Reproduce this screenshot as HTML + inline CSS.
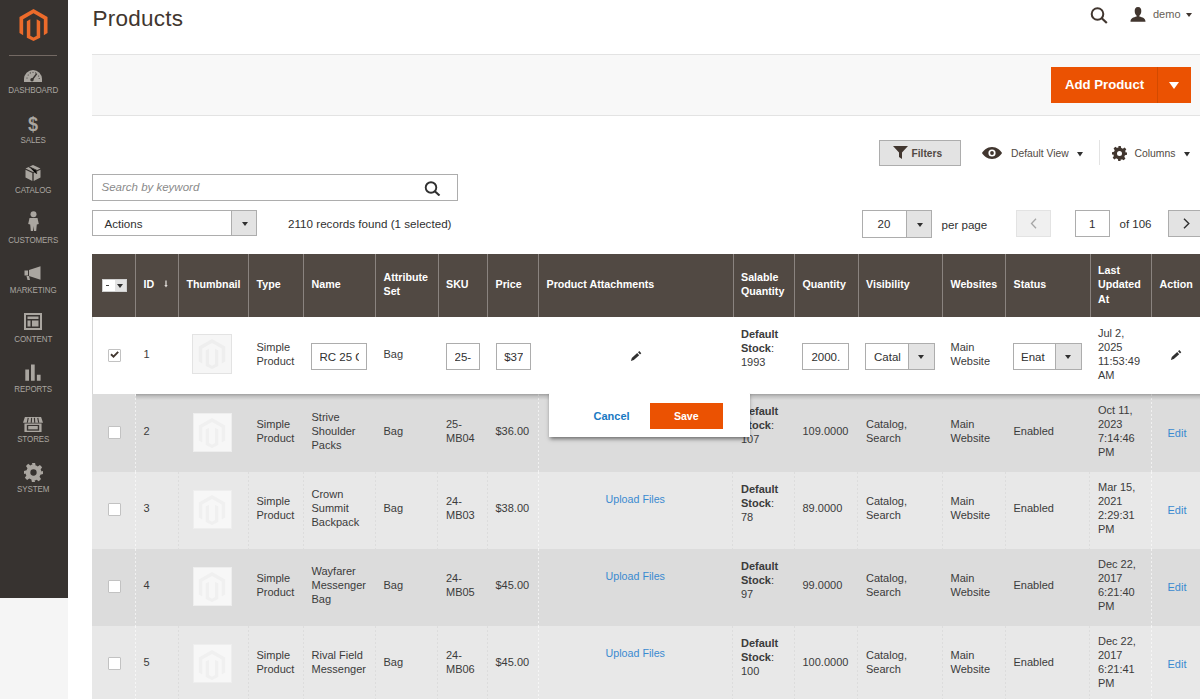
<!DOCTYPE html><html><head><meta charset="utf-8"><style>
*{margin:0;padding:0;box-sizing:border-box}
html,body{width:1200px;height:699px;overflow:hidden;background:#fff;font-family:"Liberation Sans", sans-serif;color:#303030}
.abs{position:absolute}
.sb{position:absolute;left:0;top:0;width:68px;height:598px;background:#373330}
.below{position:absolute;left:0;top:598px;width:68px;height:101px;background:#f5f5f5}
.mi{position:absolute;left:0;width:68px;text-align:center;color:#aaa6a0;font-size:8px;letter-spacing:-0.1px}
.mi span{display:inline-block;transform:scale(1,1.22)}
.cell{position:absolute;display:flex;align-items:center;padding-left:8.5px;padding-bottom:4.2px;font-size:11px;line-height:14px;color:#3b3b3b}
.hcell{position:absolute;display:flex;align-items:center;padding-left:7.5px;padding-bottom:2.8px;font-size:10.7px;line-height:14.5px;color:#fff;font-weight:bold;border-left:1px solid #8a837f}
.inp{position:absolute;background:#fff;border:1px solid #adadad;font-size:11.5px;color:#303030;overflow:hidden;white-space:nowrap}
.lnk{color:#007bdb}
.lnk2{color:#3a8ad0}
.dl{position:absolute;width:1px;background:repeating-linear-gradient(rgba(255,255,255,0.6) 0 2px,rgba(255,255,255,0) 2px 4px)}
.dl2{position:absolute;width:1px;background:repeating-linear-gradient(rgba(0,0,0,0.05) 0 2px,rgba(0,0,0,0) 2px 4px)}
</style></head><body>
<div class="sb"></div><div class="below"></div>
<svg class="abs" style="left:19.3px;top:9.2px" width="29" height="32" viewBox="0 0 30 33">
<path fill="#ec6b2b" d="M15 0 L29.5 8.3 V24.8 L25.7 27 V10.5 L15 4.3 L4.3 10.5 V27 L0.5 24.8 V8.3 Z M8.1 12.6 L11.7 10.6 V27.5 L15 29.4 L18.3 27.5 V10.6 L21.9 12.6 V29.6 L15 33 L8.1 29.6 Z"/>
</svg>
<div class="abs" style="left:9px;top:55px;width:48px;height:1px;background:#736963"></div>
<div class="mi" style="top:85.3px;left:-0.8px"><span>DASHBOARD</span></div>
<div class="mi" style="top:134.8px;left:-0.8px"><span>SALES</span></div>
<div class="mi" style="top:184.8px;left:-0.8px"><span>CATALOG</span></div>
<div class="mi" style="top:234.8px;left:-0.8px"><span>CUSTOMERS</span></div>
<div class="mi" style="top:284.8px;left:-0.8px"><span>MARKETING</span></div>
<div class="mi" style="top:334.3px;left:-0.8px"><span>CONTENT</span></div>
<div class="mi" style="top:384.3px;left:-0.8px"><span>REPORTS</span></div>
<div class="mi" style="top:433.8px;left:-0.8px"><span>STORES</span></div>
<div class="mi" style="top:483.8px;left:-0.8px"><span>SYSTEM</span></div>
<svg class="abs" style="left:24px;top:69.5px" width="18" height="12.5" viewBox="0 0 18 12.5">
<path fill="#aaa6a0" d="M9 0 A9 9 0 0 1 18 9 V12.5 H0 V9 A9 9 0 0 1 9 0Z"/>
<path stroke="#373330" stroke-width="1.5" d="M8.3 9.5 L12.8 3.6"/><circle cx="8" cy="9.8" r="1.7" fill="#373330"/>
<g fill="#373330"><circle cx="3" cy="8" r="0.55"/><circle cx="4.2" cy="5" r="0.55"/><circle cx="6.3" cy="2.9" r="0.55"/><circle cx="9" cy="2.2" r="0.55"/><circle cx="11.7" cy="2.9" r="0.55"/><circle cx="14.6" cy="6" r="0.55"/><circle cx="15.2" cy="8.5" r="0.55"/></g>
</svg>
<div class="abs" style="left:-1px;top:112.5px;width:68px;text-align:center;color:#aaa6a0;font-size:20.5px;font-weight:bold;line-height:22px;transform:scaleX(0.88)">$</div>
<svg class="abs" style="left:25px;top:165px" width="16" height="16" viewBox="0 0 16 16">
<path fill="#aaa6a0" d="M8 0 L15.5 3.5 L8 7 L0.5 3.5Z M0.5 4.8 L7.3 8 V16 L0.5 12.6Z M8.7 8 L15.5 4.8 V12.6 L8.7 16Z"/>
<path stroke="#373330" stroke-width="1.2" d="M4 1.8 L11.5 5.3 V9"/>
</svg>
<svg class="abs" style="left:28px;top:211px" width="11" height="20" viewBox="0 0 11 20">
<circle cx="5.5" cy="3.2" r="3" fill="#aaa6a0"/>
<path fill="#aaa6a0" d="M1.5 7 H9.5 L10.8 13 L8.8 13.5 L8.2 20 H6 L5.5 15 L5 20 H2.8 L2.2 13.5 L0.2 13Z"/>
</svg>
<svg class="abs" style="left:24px;top:266px" width="19" height="14" viewBox="0 0 19 14">
<path fill="#aaa6a0" d="M0.5 4.5 H4 V9.5 H0.5Z M5 4 L16.5 0.3 V13.7 L5 10Z M2.5 10 H5 L6 14 H3.5Z"/>
</svg>
<svg class="abs" style="left:24px;top:313px" width="18" height="17" viewBox="0 0 18 17">
<path fill="#aaa6a0" fill-rule="evenodd" d="M0 0 H18 V17 H0Z M2 2 V15 H16 V2Z M3.5 3.5 H14.5 V6 H3.5Z M3.5 7.5 H6.5 V13.5 H3.5Z M8 7.5 H14.5 V13.5 H8Z"/>
</svg>
<svg class="abs" style="left:25px;top:364px" width="16" height="17" viewBox="0 0 16 17">
<path fill="#aaa6a0" d="M0.3 5.5 H4 V16.7 H0.3Z M6 0.5 H9.7 V16.7 H6Z M11.9 10.8 H15.6 V16.7 H11.9Z"/>
</svg>
<svg class="abs" style="left:23px;top:416.5px" width="20" height="15" viewBox="0 0 21 17" preserveAspectRatio="none">
<path fill="#aaa6a0" d="M2 0 H19 L21 6.5 H0Z M1.5 7.5 H19.5 V17 H1.5Z"/>
<path stroke="#373330" stroke-width="1.2" d="M5.5 1 L4.5 6.5 M9 1 L8.7 6.5 M12 1 L12.3 6.5 M15.5 1 L16.5 6.5"/>
<path fill="#373330" d="M4 9 H17 V15.5 H4Z"/>
<path fill="#aaa6a0" d="M5.5 10.2 H15.5 V14 H5.5Z"/>
</svg>
<svg class="abs" style="left:24px;top:463px" width="19" height="19" viewBox="0 0 24 24">
<path fill="#aaa6a0" d="M10 0h4l.7 3.3a9 9 0 0 1 2.6 1.1l2.8-1.9 2.8 2.8-1.9 2.8a9 9 0 0 1 1.1 2.6L24 10v4l-3.3.7a9 9 0 0 1-1.1 2.6l1.9 2.8-2.8 2.8-2.8-1.9a9 9 0 0 1-2.6 1.1L14 24h-4l-.7-3.3a9 9 0 0 1-2.6-1.1l-2.8 1.9-2.8-2.8 1.9-2.8a9 9 0 0 1-1.1-2.6L0 14v-4l3.3-.7a9 9 0 0 1 1.1-2.6L2.5 3.9l2.8-2.8 2.8 1.9a9 9 0 0 1 2.6-1.1Z M12 8a4 4 0 1 0 0 8a4 4 0 1 0 0-8Z" fill-rule="evenodd"/>
</svg>
<div class="abs" style="left:92.5px;top:2.8px;font-size:22.5px;letter-spacing:0.25px;line-height:32px;color:#41362f">Products</div>
<svg class="abs" style="left:1090px;top:7px" width="19" height="17" viewBox="0 0 19 17">
<circle cx="7.5" cy="7" r="5.8" fill="none" stroke="#41362f" stroke-width="2"/>
<path d="M11.5 11 L16.8 16" stroke="#41362f" stroke-width="2.2"/></svg>
<svg class="abs" style="left:1130px;top:7px" width="16" height="15" viewBox="0 0 16 15">
<path fill="#41362f" d="M8 0 C10.5 0 11.3 1.8 11.3 4 C11.3 6.3 10.2 8.2 9.3 8.8 V9.5 C12.5 10.3 15.5 11 15.5 14.8 H0.5 C0.5 11 3.5 10.3 6.7 9.5 V8.8 C5.8 8.2 4.7 6.3 4.7 4 C4.7 1.8 5.5 0 8 0Z"/></svg>
<div class="abs" style="left:1153px;top:6px;font-size:11px;line-height:16px;color:#676056">demo</div>
<svg class="abs" style="left:1186px;top:13px" width="6" height="4" viewBox="0 0 6 4"><path d="M0 0H6L3 4Z" fill="#41362f"/></svg>
<div class="abs" style="left:92px;top:54px;width:1108px;height:62px;background:#f8f8f8;border-top:1px solid #e3e3e3;border-bottom:1px solid #e3e3e3"></div>
<div class="abs" style="left:1051px;top:67px;width:140px;height:36px;background:#eb5202"></div>
<div class="abs" style="left:1157px;top:67px;width:1px;height:36px;background:#d24a00"></div>
<div class="abs" style="left:1065px;top:76px;font-size:13.2px;line-height:18px;font-weight:bold;color:#fff">Add Product</div>
<svg class="abs" style="left:1169px;top:82px" width="10" height="7" viewBox="0 0 10 7"><path d="M0 0H10L5 7Z" fill="#fff"/></svg>
<div class="abs" style="left:879px;top:140px;width:81.5px;height:26px;background:#e3e3e3;border:1px solid #adadad"></div>
<svg class="abs" style="left:893px;top:146px" width="15" height="13" viewBox="0 0 15 13"><path d="M0 0H15L9 6.5V13L6 11V6.5Z" fill="#41362f"/></svg>
<div class="abs" style="left:911.5px;top:146px;font-size:10.2px;line-height:16px;font-weight:bold;color:#514943">Filters</div>
<svg class="abs" style="left:982px;top:147px" width="20" height="12" viewBox="0 0 20 12">
<path fill="#41362f" d="M10 0 C15 0 18.5 3.5 20 6 C18.5 8.5 15 12 10 12 C5 12 1.5 8.5 0 6 C1.5 3.5 5 0 10 0Z"/>
<circle cx="10" cy="6" r="3.6" fill="#fff"/><circle cx="10" cy="6" r="1.9" fill="#41362f"/></svg>
<div class="abs" style="left:1011px;top:146px;font-size:10.3px;line-height:16px;color:#514943">Default View</div>
<svg class="abs" style="left:1077px;top:152px" width="6" height="5" viewBox="0 0 6 5"><path d="M0 0H6L3 4.5Z" fill="#303030"/></svg>
<div class="abs" style="left:1099px;top:140px;width:1px;height:25px;background:#e3e3e3"></div>
<svg class="abs" style="left:1112px;top:146px" width="15" height="15" viewBox="0 0 24 24">
<path fill="#41362f" fill-rule="evenodd" d="M10 0h4l.7 3.3a9 9 0 0 1 2.6 1.1l2.8-1.9 2.8 2.8-1.9 2.8a9 9 0 0 1 1.1 2.6L24 10v4l-3.3.7a9 9 0 0 1-1.1 2.6l1.9 2.8-2.8 2.8-2.8-1.9a9 9 0 0 1-2.6 1.1L14 24h-4l-.7-3.3a9 9 0 0 1-2.6-1.1l-2.8 1.9-2.8-2.8 1.9-2.8a9 9 0 0 1-1.1-2.6L0 14v-4l3.3-.7a9 9 0 0 1 1.1-2.6L2.5 3.9l2.8-2.8 2.8 1.9a9 9 0 0 1 2.6-1.1Z M12 8a4 4 0 1 0 0 8a4 4 0 1 0 0-8Z"/></svg>
<div class="abs" style="left:1134.5px;top:146px;font-size:10.4px;line-height:16px;color:#514943">Columns</div>
<svg class="abs" style="left:1184px;top:152px" width="6" height="5" viewBox="0 0 6 5"><path d="M0 0H6L3 4.5Z" fill="#303030"/></svg>
<div class="abs" style="left:92px;top:174px;width:366px;height:27px;border:1px solid #adadad;background:#fff"></div>
<div class="abs" style="left:101.5px;top:180px;font-size:11.5px;line-height:15px;font-style:italic;color:#8a8a8a">Search by keyword</div>
<svg class="abs" style="left:424px;top:181px" width="18" height="15" viewBox="0 0 18 15">
<circle cx="7" cy="6.5" r="5.3" fill="none" stroke="#303030" stroke-width="1.9"/>
<path d="M10.8 10.2 L15.5 14.5" stroke="#303030" stroke-width="2.1"/></svg>
<div class="abs" style="left:92px;top:209.5px;width:165px;height:26.5px;border:1px solid #adadad;background:#fff"></div>
<div class="abs" style="left:231px;top:210.5px;width:25px;height:24.5px;background:#e3e3e3;border-left:1px solid #adadad"></div>
<svg class="abs" style="left:241.5px;top:221.5px" width="6" height="4" viewBox="0 0 6 4"><path d="M0 0H6L3 4Z" fill="#303030"/></svg>
<div class="abs" style="left:104.5px;top:215.5px;font-size:11.6px;line-height:15px;color:#303030">Actions</div>
<div class="abs" style="left:288px;top:215.5px;font-size:11.65px;line-height:15px;color:#303030">2110 records found (1 selected)</div>
<div class="abs" style="left:862px;top:210px;width:70px;height:27.5px;border:1px solid #adadad;background:#fff"></div>
<div class="abs" style="left:906px;top:211px;width:25px;height:25.5px;background:#e3e3e3;border-left:1px solid #adadad"></div>
<svg class="abs" style="left:916.5px;top:222.5px" width="6" height="4" viewBox="0 0 6 4"><path d="M0 0H6L3 4Z" fill="#303030"/></svg>
<div class="abs" style="left:877.5px;top:217px;font-size:11.5px;line-height:15px;color:#303030">20</div>
<div class="abs" style="left:941.5px;top:216.5px;font-size:11.6px;line-height:15px;color:#303030">per page</div>
<div class="abs" style="left:1016px;top:210px;width:35px;height:26.5px;border:1px solid #e3e3e3;background:#f0f0f0"></div>
<svg class="abs" style="left:1029.5px;top:218px" width="7" height="11" viewBox="0 0 7 11"><path d="M6 0.7 L1.5 5.5 L6 10.3" stroke="#a6a6a6" stroke-width="1.3" fill="none"/></svg>
<div class="abs" style="left:1074.5px;top:210px;width:35.5px;height:26.5px;border:1px solid #adadad;background:#fff"></div>
<div class="abs" style="left:1089px;top:217px;font-size:11.5px;line-height:15px;color:#303030">1</div>
<div class="abs" style="left:1119.5px;top:217px;font-size:11.5px;line-height:15px;color:#303030">of 106</div>
<div class="abs" style="left:1168px;top:210px;width:40px;height:26.5px;border:1px solid #adadad;background:#e3e3e3"></div>
<svg class="abs" style="left:1182.5px;top:217.5px" width="8" height="11" viewBox="0 0 8 11"><path d="M1 0.7 L5.8 5.5 L1 10.3" stroke="#303030" stroke-width="1.4" fill="none"/></svg>
<div class="abs" style="left:92px;top:254px;width:1108px;height:63.30000000000001px;background:#514943"></div>
<div class="hcell" style="left:92px;top:254px;width:43px;height:63.30000000000001px;border-left:none;"><div></div></div>
<div class="hcell" style="left:135px;top:254px;width:43px;height:63.30000000000001px;"><div>ID</div></div>
<div class="hcell" style="left:178px;top:254px;width:70px;height:63.30000000000001px;"><div>Thumbnail</div></div>
<div class="hcell" style="left:248px;top:254px;width:55px;height:63.30000000000001px;"><div>Type</div></div>
<div class="hcell" style="left:303px;top:254px;width:72px;height:63.30000000000001px;"><div>Name</div></div>
<div class="hcell" style="left:375px;top:254px;width:62.5px;height:63.30000000000001px;"><div>Attribute<br>Set</div></div>
<div class="hcell" style="left:437.5px;top:254px;width:49.5px;height:63.30000000000001px;"><div>SKU</div></div>
<div class="hcell" style="left:487px;top:254px;width:51px;height:63.30000000000001px;"><div>Price</div></div>
<div class="hcell" style="left:538px;top:254px;width:194.5px;height:63.30000000000001px;"><div>Product Attachments</div></div>
<div class="hcell" style="left:732.5px;top:254px;width:61.5px;height:63.30000000000001px;"><div>Salable<br>Quantity</div></div>
<div class="hcell" style="left:794px;top:254px;width:63.5px;height:63.30000000000001px;"><div>Quantity</div></div>
<div class="hcell" style="left:857.5px;top:254px;width:84.5px;height:63.30000000000001px;"><div>Visibility</div></div>
<div class="hcell" style="left:942px;top:254px;width:63px;height:63.30000000000001px;"><div>Websites</div></div>
<div class="hcell" style="left:1005px;top:254px;width:84.5px;height:63.30000000000001px;"><div>Status</div></div>
<div class="hcell" style="left:1089.5px;top:254px;width:61.5px;height:63.30000000000001px;"><div>Last<br>Updated<br>At</div></div>
<div class="hcell" style="left:1151px;top:254px;width:64px;height:63.30000000000001px;"><div>Action</div></div>
<div class="abs" style="left:102px;top:279px;width:25px;height:13px;background:#fff;border:1px solid #d0d0d0"></div>
<div class="abs" style="left:114.5px;top:280px;width:11.5px;height:11px;background:#e3e3e3"></div>
<div class="abs" style="left:106px;top:285.3px;width:3.2px;height:1.2px;background:#404040"></div>
<svg class="abs" style="left:117px;top:283.5px" width="6" height="4" viewBox="0 0 6 4"><path d="M0 0H6L3 4Z" fill="#303030"/></svg>
<svg class="abs" style="left:164px;top:280px" width="4" height="8" viewBox="0 0 4 8"><path d="M2 0.5 V6" stroke="#dedad6" stroke-width="1.3"/><path d="M0.3 5 H3.7 L2 7.5Z" fill="#dedad6"/></svg>
<div class="abs" style="left:92px;top:394.4px;width:1108px;height:77.60000000000002px;background:#dcdcdc"></div>
<div class="dl" style="left:134.5px;top:394.4px;height:77.60000000000002px"></div>
<div class="dl" style="left:537.5px;top:394.4px;height:77.60000000000002px"></div>
<div class="dl" style="left:1150.5px;top:394.4px;height:77.60000000000002px"></div>
<div class="cell" style="left:135px;top:394.4px;width:43px;height:77.60000000000002px;"><div>2</div></div>
<div class="cell" style="left:248px;top:394.4px;width:55px;height:77.60000000000002px;"><div>Simple<br>Product</div></div>
<div class="cell" style="left:303px;top:394.4px;width:72px;height:77.60000000000002px;"><div>Strive<br>Shoulder<br>Packs</div></div>
<div class="cell" style="left:375px;top:394.4px;width:62.5px;height:77.60000000000002px;"><div>Bag</div></div>
<div class="cell" style="left:437.5px;top:394.4px;width:49.5px;height:77.60000000000002px;"><div>25-<br>MB04</div></div>
<div class="cell" style="left:487px;top:394.4px;width:51px;height:77.60000000000002px;"><div>$36.00</div></div>
<div class="cell" style="left:732.5px;top:394.4px;width:61.5px;height:77.60000000000002px;padding-bottom:15.7px;"><div><b>Default<br>Stock</b>:<br>107</div></div>
<div class="cell" style="left:794px;top:394.4px;width:63.5px;height:77.60000000000002px;"><div>109.0000</div></div>
<div class="cell" style="left:857.5px;top:394.4px;width:84.5px;height:77.60000000000002px;"><div>Catalog,<br>Search</div></div>
<div class="cell" style="left:942px;top:394.4px;width:63px;height:77.60000000000002px;"><div>Main<br>Website</div></div>
<div class="cell" style="left:1005px;top:394.4px;width:84.5px;height:77.60000000000002px;"><div>Enabled</div></div>
<div class="cell" style="left:1089.5px;top:394.4px;width:61.5px;height:77.60000000000002px;"><div>Oct 11,<br>2023<br>7:14:46<br>PM</div></div>
<div class="abs" style="left:108px;top:425.59999999999997px;width:13px;height:13px;background:#fff;border:1px solid #c2c2c2;border-radius:1px"></div>
<div class="abs" style="left:192.5px;top:412.7px;width:39px;height:39px;background:#f7f7f7;border:1px solid #eeeeee"></div>
<svg class="abs" style="left:197px;top:418.2px" width="30" height="30" viewBox="0 0 30 33"><path fill="#f0f0f0" d="M15 0 L29.5 8.3 V24.8 L25.7 27 V10.5 L15 4.3 L4.3 10.5 V27 L0.5 24.8 V8.3 Z M8.1 12.6 L11.7 10.6 V27.5 L15 29.4 L18.3 27.5 V10.6 L21.9 12.6 V29.6 L15 33 L8.1 29.6 Z"/></svg>
<div class="abs lnk2" style="left:1167.5px;top:425.59999999999997px;font-size:11px;line-height:14px">Edit</div>
<div class="abs" style="left:92px;top:472.0px;width:1108px;height:76.89999999999998px;background:#e8e8e8"></div>
<div class="dl" style="left:134.5px;top:472.0px;height:76.89999999999998px"></div>
<div class="dl2" style="left:177.5px;top:472.0px;height:76.89999999999998px"></div>
<div class="dl2" style="left:247.5px;top:472.0px;height:76.89999999999998px"></div>
<div class="dl2" style="left:302.5px;top:472.0px;height:76.89999999999998px"></div>
<div class="dl2" style="left:374.5px;top:472.0px;height:76.89999999999998px"></div>
<div class="dl2" style="left:437.0px;top:472.0px;height:76.89999999999998px"></div>
<div class="dl2" style="left:486.5px;top:472.0px;height:76.89999999999998px"></div>
<div class="dl" style="left:537.5px;top:472.0px;height:76.89999999999998px"></div>
<div class="dl2" style="left:732.0px;top:472.0px;height:76.89999999999998px"></div>
<div class="dl2" style="left:793.5px;top:472.0px;height:76.89999999999998px"></div>
<div class="dl2" style="left:857.0px;top:472.0px;height:76.89999999999998px"></div>
<div class="dl2" style="left:941.5px;top:472.0px;height:76.89999999999998px"></div>
<div class="dl2" style="left:1004.5px;top:472.0px;height:76.89999999999998px"></div>
<div class="dl2" style="left:1089.0px;top:472.0px;height:76.89999999999998px"></div>
<div class="dl" style="left:1150.5px;top:472.0px;height:76.89999999999998px"></div>
<div class="cell" style="left:135px;top:472.0px;width:43px;height:76.89999999999998px;"><div>3</div></div>
<div class="cell" style="left:248px;top:472.0px;width:55px;height:76.89999999999998px;"><div>Simple<br>Product</div></div>
<div class="cell" style="left:303px;top:472.0px;width:72px;height:76.89999999999998px;"><div>Crown<br>Summit<br>Backpack</div></div>
<div class="cell" style="left:375px;top:472.0px;width:62.5px;height:76.89999999999998px;"><div>Bag</div></div>
<div class="cell" style="left:437.5px;top:472.0px;width:49.5px;height:76.89999999999998px;"><div>24-<br>MB03</div></div>
<div class="cell" style="left:487px;top:472.0px;width:51px;height:76.89999999999998px;"><div>$38.00</div></div>
<div class="cell" style="left:732.5px;top:472.0px;width:61.5px;height:76.89999999999998px;padding-bottom:15.7px;"><div><b>Default<br>Stock</b>:<br>78</div></div>
<div class="cell" style="left:794px;top:472.0px;width:63.5px;height:76.89999999999998px;"><div>89.0000</div></div>
<div class="cell" style="left:857.5px;top:472.0px;width:84.5px;height:76.89999999999998px;"><div>Catalog,<br>Search</div></div>
<div class="cell" style="left:942px;top:472.0px;width:63px;height:76.89999999999998px;"><div>Main<br>Website</div></div>
<div class="cell" style="left:1005px;top:472.0px;width:84.5px;height:76.89999999999998px;"><div>Enabled</div></div>
<div class="cell" style="left:1089.5px;top:472.0px;width:61.5px;height:76.89999999999998px;"><div>Mar 15,<br>2021<br>2:29:31<br>PM</div></div>
<div class="abs" style="left:108px;top:502.84999999999997px;width:13px;height:13px;background:#fff;border:1px solid #c2c2c2;border-radius:1px"></div>
<div class="abs" style="left:192.5px;top:489.95px;width:39px;height:39px;background:#f7f7f7;border:1px solid #eeeeee"></div>
<svg class="abs" style="left:197px;top:495.45px" width="30" height="30" viewBox="0 0 30 33"><path fill="#f0f0f0" d="M15 0 L29.5 8.3 V24.8 L25.7 27 V10.5 L15 4.3 L4.3 10.5 V27 L0.5 24.8 V8.3 Z M8.1 12.6 L11.7 10.6 V27.5 L15 29.4 L18.3 27.5 V10.6 L21.9 12.6 V29.6 L15 33 L8.1 29.6 Z"/></svg>
<div class="abs lnk2" style="left:538px;top:492.25px;width:194.5px;text-align:center;font-size:10.7px;line-height:14px">Upload Files</div>
<div class="abs lnk2" style="left:1167.5px;top:502.84999999999997px;font-size:11px;line-height:14px">Edit</div>
<div class="abs" style="left:92px;top:548.9px;width:1108px;height:77.10000000000002px;background:#dcdcdc"></div>
<div class="dl" style="left:134.5px;top:548.9px;height:77.10000000000002px"></div>
<div class="dl" style="left:537.5px;top:548.9px;height:77.10000000000002px"></div>
<div class="dl" style="left:1150.5px;top:548.9px;height:77.10000000000002px"></div>
<div class="cell" style="left:135px;top:548.9px;width:43px;height:77.10000000000002px;"><div>4</div></div>
<div class="cell" style="left:248px;top:548.9px;width:55px;height:77.10000000000002px;"><div>Simple<br>Product</div></div>
<div class="cell" style="left:303px;top:548.9px;width:72px;height:77.10000000000002px;"><div>Wayfarer<br>Messenger<br>Bag</div></div>
<div class="cell" style="left:375px;top:548.9px;width:62.5px;height:77.10000000000002px;"><div>Bag</div></div>
<div class="cell" style="left:437.5px;top:548.9px;width:49.5px;height:77.10000000000002px;"><div>24-<br>MB05</div></div>
<div class="cell" style="left:487px;top:548.9px;width:51px;height:77.10000000000002px;"><div>$45.00</div></div>
<div class="cell" style="left:732.5px;top:548.9px;width:61.5px;height:77.10000000000002px;padding-bottom:15.7px;"><div><b>Default<br>Stock</b>:<br>97</div></div>
<div class="cell" style="left:794px;top:548.9px;width:63.5px;height:77.10000000000002px;"><div>99.0000</div></div>
<div class="cell" style="left:857.5px;top:548.9px;width:84.5px;height:77.10000000000002px;"><div>Catalog,<br>Search</div></div>
<div class="cell" style="left:942px;top:548.9px;width:63px;height:77.10000000000002px;"><div>Main<br>Website</div></div>
<div class="cell" style="left:1005px;top:548.9px;width:84.5px;height:77.10000000000002px;"><div>Enabled</div></div>
<div class="cell" style="left:1089.5px;top:548.9px;width:61.5px;height:77.10000000000002px;"><div>Dec 22,<br>2017<br>6:21:40<br>PM</div></div>
<div class="abs" style="left:108px;top:579.85px;width:13px;height:13px;background:#fff;border:1px solid #c2c2c2;border-radius:1px"></div>
<div class="abs" style="left:192.5px;top:566.95px;width:39px;height:39px;background:#f7f7f7;border:1px solid #eeeeee"></div>
<svg class="abs" style="left:197px;top:572.45px" width="30" height="30" viewBox="0 0 30 33"><path fill="#f0f0f0" d="M15 0 L29.5 8.3 V24.8 L25.7 27 V10.5 L15 4.3 L4.3 10.5 V27 L0.5 24.8 V8.3 Z M8.1 12.6 L11.7 10.6 V27.5 L15 29.4 L18.3 27.5 V10.6 L21.9 12.6 V29.6 L15 33 L8.1 29.6 Z"/></svg>
<div class="abs lnk2" style="left:538px;top:569.25px;width:194.5px;text-align:center;font-size:10.7px;line-height:14px">Upload Files</div>
<div class="abs lnk2" style="left:1167.5px;top:579.85px;font-size:11px;line-height:14px">Edit</div>
<div class="abs" style="left:92px;top:626.0px;width:1108px;height:77.0px;background:#e8e8e8"></div>
<div class="dl" style="left:134.5px;top:626.0px;height:77.0px"></div>
<div class="dl2" style="left:177.5px;top:626.0px;height:77.0px"></div>
<div class="dl2" style="left:247.5px;top:626.0px;height:77.0px"></div>
<div class="dl2" style="left:302.5px;top:626.0px;height:77.0px"></div>
<div class="dl2" style="left:374.5px;top:626.0px;height:77.0px"></div>
<div class="dl2" style="left:437.0px;top:626.0px;height:77.0px"></div>
<div class="dl2" style="left:486.5px;top:626.0px;height:77.0px"></div>
<div class="dl" style="left:537.5px;top:626.0px;height:77.0px"></div>
<div class="dl2" style="left:732.0px;top:626.0px;height:77.0px"></div>
<div class="dl2" style="left:793.5px;top:626.0px;height:77.0px"></div>
<div class="dl2" style="left:857.0px;top:626.0px;height:77.0px"></div>
<div class="dl2" style="left:941.5px;top:626.0px;height:77.0px"></div>
<div class="dl2" style="left:1004.5px;top:626.0px;height:77.0px"></div>
<div class="dl2" style="left:1089.0px;top:626.0px;height:77.0px"></div>
<div class="dl" style="left:1150.5px;top:626.0px;height:77.0px"></div>
<div class="cell" style="left:135px;top:626.0px;width:43px;height:77.0px;"><div>5</div></div>
<div class="cell" style="left:248px;top:626.0px;width:55px;height:77.0px;"><div>Simple<br>Product</div></div>
<div class="cell" style="left:303px;top:626.0px;width:72px;height:77.0px;"><div>Rival Field<br>Messenger</div></div>
<div class="cell" style="left:375px;top:626.0px;width:62.5px;height:77.0px;"><div>Bag</div></div>
<div class="cell" style="left:437.5px;top:626.0px;width:49.5px;height:77.0px;"><div>24-<br>MB06</div></div>
<div class="cell" style="left:487px;top:626.0px;width:51px;height:77.0px;"><div>$45.00</div></div>
<div class="cell" style="left:732.5px;top:626.0px;width:61.5px;height:77.0px;padding-bottom:15.7px;"><div><b>Default<br>Stock</b>:<br>100</div></div>
<div class="cell" style="left:794px;top:626.0px;width:63.5px;height:77.0px;"><div>100.0000</div></div>
<div class="cell" style="left:857.5px;top:626.0px;width:84.5px;height:77.0px;"><div>Catalog,<br>Search</div></div>
<div class="cell" style="left:942px;top:626.0px;width:63px;height:77.0px;"><div>Main<br>Website</div></div>
<div class="cell" style="left:1005px;top:626.0px;width:84.5px;height:77.0px;"><div>Enabled</div></div>
<div class="cell" style="left:1089.5px;top:626.0px;width:61.5px;height:77.0px;"><div>Dec 22,<br>2017<br>6:21:41<br>PM</div></div>
<div class="abs" style="left:108px;top:656.9px;width:13px;height:13px;background:#fff;border:1px solid #c2c2c2;border-radius:1px"></div>
<div class="abs" style="left:192.5px;top:644.0px;width:39px;height:39px;background:#f7f7f7;border:1px solid #eeeeee"></div>
<svg class="abs" style="left:197px;top:649.5px" width="30" height="30" viewBox="0 0 30 33"><path fill="#f0f0f0" d="M15 0 L29.5 8.3 V24.8 L25.7 27 V10.5 L15 4.3 L4.3 10.5 V27 L0.5 24.8 V8.3 Z M8.1 12.6 L11.7 10.6 V27.5 L15 29.4 L18.3 27.5 V10.6 L21.9 12.6 V29.6 L15 33 L8.1 29.6 Z"/></svg>
<div class="abs lnk2" style="left:538px;top:646.3px;width:194.5px;text-align:center;font-size:10.7px;line-height:14px">Upload Files</div>
<div class="abs lnk2" style="left:1167.5px;top:656.9px;font-size:11px;line-height:14px">Edit</div>
<div class="abs" style="left:135.5px;top:394.4px;width:1065px;height:6px;background:linear-gradient(rgba(0,0,0,0.27),rgba(0,0,0,0.12) 40%,rgba(0,0,0,0))"></div>
<div class="abs" style="left:92px;top:317.3px;width:1108px;height:77.09999999999997px;background:#fff;border-left:1px solid #d6d6d6"></div>
<div class="cell" style="left:135px;top:317.3px;width:43px;height:77.09999999999997px;"><div>1</div></div>
<div class="cell" style="left:248px;top:317.3px;width:55px;height:77.09999999999997px;"><div>Simple<br>Product</div></div>
<div class="cell" style="left:375px;top:317.3px;width:62.5px;height:77.09999999999997px;"><div>Bag</div></div>
<div class="cell" style="left:732.5px;top:317.3px;width:61.5px;height:77.09999999999997px;padding-bottom:15.7px;"><div><b>Default<br>Stock</b>:<br>1993</div></div>
<div class="cell" style="left:942px;top:317.3px;width:63px;height:77.09999999999997px;"><div>Main<br>Website</div></div>
<div class="cell" style="left:1089.5px;top:317.3px;width:61.5px;height:77.09999999999997px;"><div>Jul 2,<br>2025<br>11:53:49<br>AM</div></div>
<div class="abs" style="left:108px;top:348.5px;width:13px;height:13px;background:#fff;border:1px solid #c2c2c2;border-radius:1px"></div>
<svg class="abs" style="left:110px;top:351px" width="9" height="7" viewBox="0 0 9 7"><path d="M1 3.2 L3.5 5.6 L8.2 0.9" stroke="#41362f" stroke-width="1.9" fill="none"/></svg>
<div class="abs" style="left:192px;top:334px;width:40px;height:40px;background:#f6f6f6;border:1px solid #e3e3e3"></div>
<svg class="abs" style="left:197px;top:339px" width="30" height="30" viewBox="0 0 30 33"><path fill="#eeeeee" d="M15 0 L29.5 8.3 V24.8 L25.7 27 V10.5 L15 4.3 L4.3 10.5 V27 L0.5 24.8 V8.3 Z M8.1 12.6 L11.7 10.6 V27.5 L15 29.4 L18.3 27.5 V10.6 L21.9 12.6 V29.6 L15 33 L8.1 29.6 Z"/></svg>
<div class="inp" style="left:311px;top:343px;width:55.5px;height:26.5px"><div style="position:absolute;left:7.5px;top:5.5px;width:39.5px;overflow:hidden;line-height:15px">RC 25 C</div></div>
<div class="inp" style="left:446px;top:343px;width:34px;height:26.5px"><div style="position:absolute;left:7.5px;top:5.5px;width:40.0px;overflow:hidden;line-height:15px">25-</div></div>
<div class="inp" style="left:496px;top:343px;width:34.5px;height:26.5px"><div style="position:absolute;left:7.2px;top:5.5px;width:19.3px;overflow:hidden;line-height:15px">$37</div></div>
<div class="inp" style="left:802px;top:343px;width:47px;height:26.5px"><div style="position:absolute;left:8.4px;top:5.5px;width:30.1px;overflow:hidden;line-height:15px">2000.</div></div>
<div class="inp" style="left:865px;top:343px;width:70px;height:26.5px"><div style="position:absolute;left:8px;top:5.5px;width:26.5px;overflow:hidden;line-height:15px">Catal</div></div>
<div class="abs" style="left:907.5px;top:344px;width:26.5px;height:24.5px;background:#e3e3e3;border-left:1px solid #adadad"></div>
<svg class="abs" style="left:918px;top:354.5px" width="6" height="4" viewBox="0 0 6 4"><path d="M0 0H6L3 4Z" fill="#303030"/></svg>
<div class="inp" style="left:1013px;top:343px;width:68.5px;height:26.5px"><div style="position:absolute;left:7px;top:5.5px;width:26.5px;overflow:hidden;line-height:15px">Enat</div></div>
<div class="abs" style="left:1055px;top:344px;width:25.5px;height:24.5px;background:#e3e3e3;border-left:1px solid #adadad"></div>
<svg class="abs" style="left:1065px;top:354.5px" width="6" height="4" viewBox="0 0 6 4"><path d="M0 0H6L3 4Z" fill="#303030"/></svg>
<svg class="abs" style="left:629.5px;top:350.5px" width="12" height="11" viewBox="0 0 12 11"><path d="M1.8 6.9 L7.2 2.0 L9.2 4.2 L3.8 9.1 Z M1.8 6.9 L3.8 9.1 L0.9 10.1 Z M8.0 1.2 L9.3 0.0 L11.3 2.2 L10.0 3.4 Z" fill="#303030"/></svg>
<svg class="abs" style="left:1170px;top:350px" width="12" height="11" viewBox="0 0 12 11"><path d="M1.8 6.9 L7.2 2.0 L9.2 4.2 L3.8 9.1 Z M1.8 6.9 L3.8 9.1 L0.9 10.1 Z M8.0 1.2 L9.3 0.0 L11.3 2.2 L10.0 3.4 Z" fill="#303030"/></svg>
<div class="abs" style="left:549px;top:390px;width:201px;height:46.5px;background:#fff;box-shadow:0 3px 4px -1px rgba(0,0,0,0.5);clip-path:inset(3.5px -10px -10px -10px)"></div>
<div class="abs" style="left:593.5px;top:408px;font-size:11px;line-height:16px;font-weight:bold;color:#1979c3">Cancel</div>
<div class="abs" style="left:650px;top:402.5px;width:72.5px;height:26.5px;background:#eb5202;color:#fff;font-weight:bold;font-size:10.6px;line-height:26.5px;text-align:center">Save</div>
</body></html>
